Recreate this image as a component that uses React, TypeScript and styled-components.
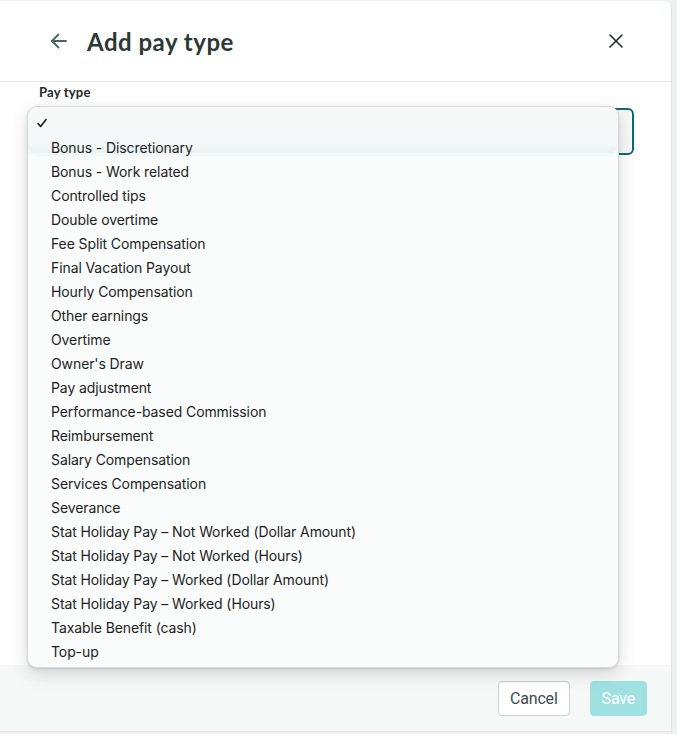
import React from 'react';
import styled, { createGlobalStyle } from 'styled-components';

const GlobalStyle = createGlobalStyle`
  html, body {
    margin: 0;
    padding: 0;
    background: #eef1f1;
  }
  * {
    box-sizing: border-box;
  }
`

const Modal = styled.div`
  width: 672px;
  height: 731px;
  margin-top: 1px;
  background: #ffffff;
  border-right: 1px solid #dfe3e3;
  border-bottom: 1px solid #dfe3e3;
  border-top-right-radius: 6px;
  display: flex;
  flex-direction: column;
  font-family: Lato, "Open Sans", sans-serif;
`

const Header = styled.div`
  height: 81px;
  display: flex;
  align-items: center;
  padding: 0 48px 0 49px;
  border-bottom: 1px solid #e4e8e8;
`

const IconButton = styled.button`
  border: none;
  background: none;
  padding: 0;
  display: flex;
  align-items: center;
  justify-content: center;
  cursor: pointer;
  color: ${(p: { tone?: string }) => p.tone || '#1f2a2a'};
`

const Title = styled.h1`
  flex: 1;
  margin: 0 0 0 18px;
  font-size: 24px;
  font-weight: 700;
  color: #2b3838;
  letter-spacing: 0.5px;
`

const Body = styled.div`
  flex: 1;
  padding: 2px 37px 0 39px;
`

const Field = styled.div`
  position: relative;
`

const Label = styled.div`
  font-size: 13px;
  font-weight: 700;
  color: #1f2a2a;
  line-height: 16px;
  margin-bottom: 8px;
  letter-spacing: 0.2px;
`

const SelectBox = styled.div`
  height: 47px;
  border: 2px solid #106a6c;
  border-radius: 6px;
  background: #f7f8f8;
`

const Menu = styled.ul`
  position: absolute;
  left: -12px;
  top: 22px;
  width: 592px;
  margin: 0;
  padding: 4px 0 4px;
  list-style: none;
  background: #fafbfb;
  border-radius: 10px;
  border: 1px solid #d6d9d9;
  box-shadow: 0 6px 18px rgba(0, 0, 0, 0.14), 0 1px 3px rgba(0, 0, 0, 0.12);
  font-family: Inter, "Liberation Sans", sans-serif;
  overflow: hidden;

  &::before {
    content: '';
    position: absolute;
    left: 0;
    right: 0;
    top: 0;
    height: 47px;
    border-radius: 10px;
    background: linear-gradient(180deg, #f6f8f8 0%, #f4f7f7 80%, #e9f2f2 96%, #fafbfb 100%);
    box-shadow: 0 2px 3px rgba(40, 130, 130, 0.05);
  }
`

const Option = styled.li`
  position: relative;
  height: 24px;
  display: flex;
  align-items: center;
  padding-left: ${(p: { checked?: boolean }) => (p.checked ? '8px' : '23px')};
  font-size: 14px;
  color: #1d1d1f;
  letter-spacing: -0.1px;
`

const Footer = styled.div`
  height: 66px;
  background: #f6f7f7;
  display: flex;
  align-items: center;
  justify-content: flex-end;
  gap: 20px;
  padding-right: 24px;
`

const Button = styled.button`
  height: 35px;
  padding: 0 11px;
  border-radius: 4px;
  font-family: Roboto, "Liberation Sans", sans-serif;
  font-size: 16px;
  letter-spacing: -0.2px;
  border: 1px solid ${(p: { primary?: boolean }) => (p.primary ? '#9fe1e1' : '#c9d1d1')};
  background: ${(p: { primary?: boolean }) => (p.primary ? '#9fe1e1' : '#ffffff')};
  color: ${(p: { primary?: boolean }) => (p.primary ? '#ffffff' : '#3e4b4b')};
`

const payTypes = [
  'Bonus - Discretionary',
  'Bonus - Work related',
  'Controlled tips',
  'Double overtime',
  'Fee Split Compensation',
  'Final Vacation Payout',
  'Hourly Compensation',
  'Other earnings',
  'Overtime',
  "Owner's Draw",
  'Pay adjustment',
  'Performance-based Commission',
  'Reimbursement',
  'Salary Compensation',
  'Services Compensation',
  'Severance',
  'Stat Holiday Pay – Not Worked (Dollar Amount)',
  'Stat Holiday Pay – Not Worked (Hours)',
  'Stat Holiday Pay – Worked (Dollar Amount)',
  'Stat Holiday Pay – Worked (Hours)',
  'Taxable Benefit (cash)',
  'Top-up',
]

const App: React.FC = () => {
  return (
    <>
      <GlobalStyle />
      <Modal>
        <Header>
          <IconButton tone="#4e6363" aria-label="Back">
            <svg width="20" height="20" viewBox="0 0 20 20" fill="none" stroke="currentColor" strokeWidth="1.8" strokeLinecap="round" strokeLinejoin="round">
              <path d="M17 10H3" />
              <path d="M9.5 3.5 3 10l6.5 6.5" />
            </svg>
          </IconButton>
          <Title>Add pay type</Title>
          <IconButton aria-label="Close">
            <svg width="14" height="14" viewBox="0 0 14 14" fill="none" stroke="currentColor" strokeWidth="1.6" strokeLinecap="round">
              <path d="M1 1l12 12" />
              <path d="M13 1 1 13" />
            </svg>
          </IconButton>
        </Header>
        <Body>
          <Field>
            <Label>Pay type</Label>
            <SelectBox />
            <Menu>
              <Option checked>
                <svg width="12" height="12" viewBox="0 0 12 12" fill="none" stroke="#1d1d1f" strokeWidth="1.6" strokeLinecap="round" strokeLinejoin="round">
                  <path d="M2 6.5 4.6 9.5 10 2.5" />
                </svg>
              </Option>
              {payTypes.map((name) => (
                <Option key={name}>{name}</Option>
              ))}
            </Menu>
          </Field>
        </Body>
        <Footer>
          <Button>Cancel</Button>
          <Button primary>Save</Button>
        </Footer>
      </Modal>
    </>
  );
}

export default App;
